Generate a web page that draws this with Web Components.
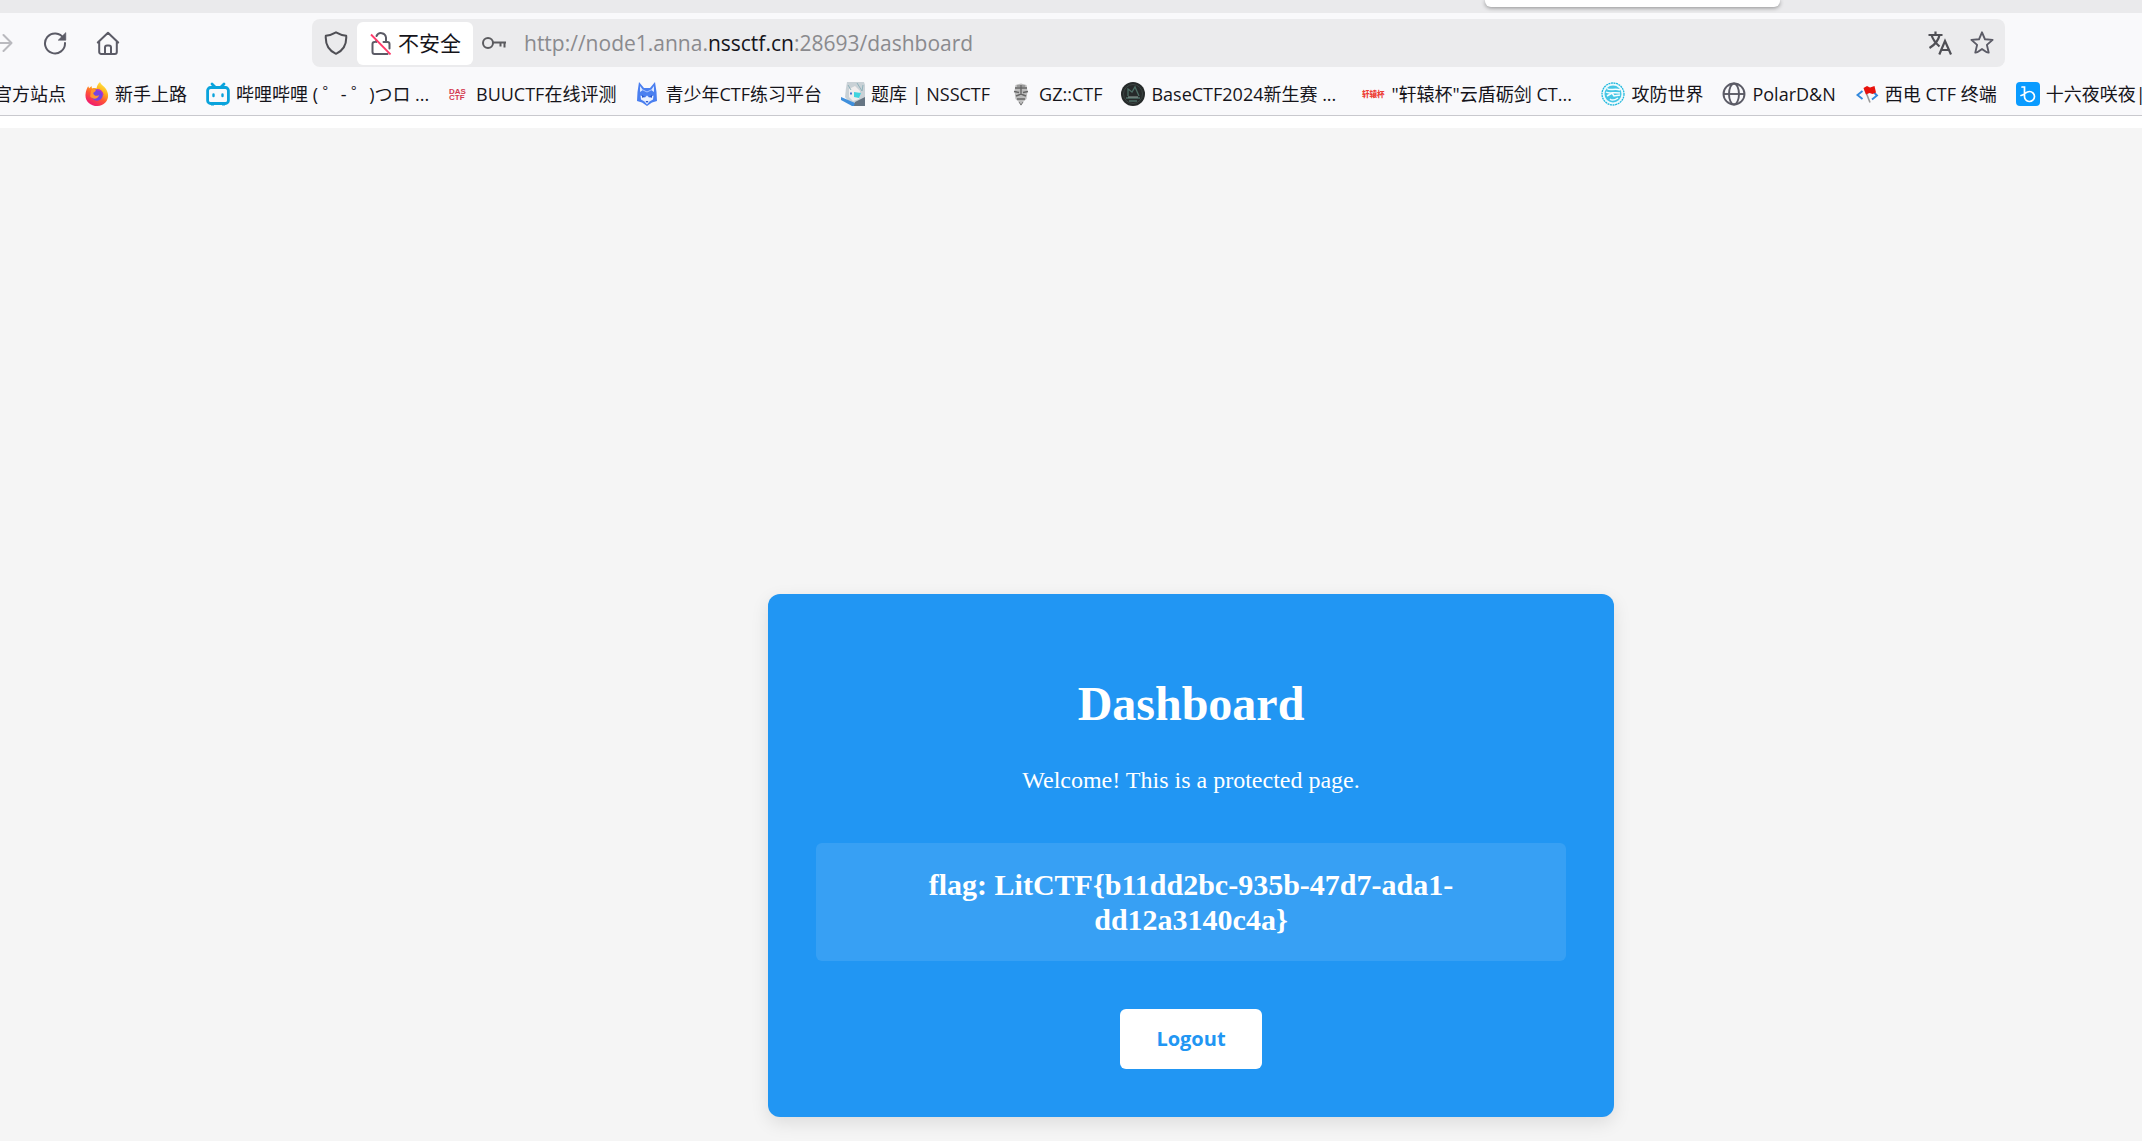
<!DOCTYPE html>
<html lang="zh-CN">
<head>
<meta charset="utf-8">
<title>Dashboard</title>
<style>
html, body { height: 100%; margin: 0; }
body { overflow: hidden; background: #f5f5f5; }
</style>
</head>
<body>
<browser-window></browser-window>
<script>
const ICONS = {
  forward: `<g fill="none" stroke="#b9b9be" stroke-width="2" stroke-linecap="round" stroke-linejoin="round"><path d="M1 12H21M13.500 4l8 8-8 8"/></g>`,
  reload: `<path d="M20.6 7.3A10 10 0 1 0 22 12" fill="none" stroke="#5b5b66" stroke-width="2" stroke-linecap="round"/><path d="M22.8 1.6v7.6h-7.6z" fill="#5b5b66" stroke="#5b5b66" stroke-linejoin="round" stroke-width=".6"/>`,
  home: `<g fill="none" stroke="#5b5b66" stroke-width="2" stroke-linejoin="round" stroke-linecap="round"><path d="M1.8 11.5L12 1.8l10.200 9.700M3.200 10.500V21a2 2 0 0 0 2 2h13.600a2 2 0 0 0 2-2V10.500M9 23v-6.500a2 2 0 0 1 2-2h2a2 2 0 0 1 2 2V23"/></g>`,
  shield: `<path d="M12 1.300C9 3 5.500 4.300 1.800 4.800 1.300 12.500 4.500 19.500 12 22.800 19.500 19.500 22.700 12.500 22.200 4.800 18.500 4.300 15 3 12 1.300z" fill="none" stroke="#4f4f55" stroke-width="2" stroke-linejoin="round"/>`,
  lock: `<g fill="none" stroke="#5b5b66" stroke-width="2" stroke-linecap="round"><path d="M7.500 5A5 5 0 0 1 17 6.500V11M7.300 9.500V11M14.500 11h4a2 2 0 0 1 2 2v4.500M5.500 11a2 2 0 0 0-2 2V21a2 2 0 0 0 2 2H18.500"/></g><path d="M2 3.500l19.500 20" stroke="#ff3b6b" stroke-width="1.800"/>`,
  key: `<g fill="none" stroke="#5b5b5f" stroke-width="2"><circle cx="6" cy="12" r="5"/><path d="M11 11.500h13M18.500 11.500v4M22.500 11.500v5"/></g>`,
  translate: `<g fill="none" stroke="#4f4f55" stroke-width="2.200"><path d="M.5 4H14.500M7.500 .5V4M11.500 4C10.500 9.500 6.500 14 1.500 17M3.500 4c1.500 5 4.500 8.500 8 11.500M11.300 23.500L17 10l6 13.500M13.200 19h8"/></g>`,
  star: `<path d="M12 1.300l3 7 7.600.6-5.700 5 1.800 7.700c-2.500.5-4-2.100-6.700-3.600-2.700 1.500-4.200 4.100-6.700 3.600l1.800-7.700-5.700-5L9 8.300z" fill="none" stroke="#5b5b66" stroke-width="1.900" stroke-linejoin="round"/>`,
  firefox: `<defs><linearGradient id="f" x1=".85" y1="0" x2=".3" y2="1"><stop offset="0" stop-color="#fff44f"/><stop offset=".35" stop-color="#ffb11b"/><stop offset=".62" stop-color="#ff5634"/><stop offset="1" stop-color="#ef1674"/></linearGradient></defs><path d="M15 0c1 3 4 4 6 7 5 8 .5 16.500-8.500 17C5 24 0 19 .5 12.500.7 9 2 6 3.200 4.200l1 2L6.500 4 7 6.500c1.500-.6 3-.6 4.500 0C12 3.500 13.200 1.500 15 0z" fill="url(#f)"/><circle cx="12" cy="13" r="5.800" fill="#7542e5"/><path d="M6 8.500c2-1.500 4-1 5 .2L8.200 11c.5 2.500 3 3.800 6 2-1 4-6 5-9 1.500z" fill="#ff9630"/><path d="M12 8c3-.5 5.500 1.500 5.800 5" stroke="#b833c7" stroke-width="1.500" fill="none"/>`,
  bili: `<g fill="none" stroke="#0aa3dc" stroke-width="2.800" stroke-linecap="round"><rect x="1.600" y="5.500" width="20.800" height="16" rx="3"/><path d="M6 2l3 3M18 2l-3 3"/><path d="M7.500 12.500v1.500M16.500 12.500v1.500" stroke-width="2.400"/></g><path d="M5 22h3v1.500H5zM16 22h3v1.500h-3z" fill="#0aa3dc"/>`,
  das: `<g fill="#d43a50" font-family="Liberation Sans" font-weight="700" font-size="8"><text x="3" y="11.500">DAS</text><text x="3" y="18">CTF</text></g>`,
  fox: `<path d="M4 0l5 6h6l5-6 1.500 10 .5 9-5 1.500-5 3.500-5-3.500L2 19l.5-9z" fill="#4a7ff0"/><path d="M5 4l3 4-3 2zM19 4l-3 4 3 2z" fill="#dbe7ff"/><path d="M5.500 13.500l4.500 2 2-2 2 2 4.500-2-.5 4-3.500 2-2.500 3-2.500-3-3.500-2z" fill="#e9f0ff"/><path d="M7 13l3 2-3 .8zM17 13l-3 2 3 .8zM10.500 19h3L12 21z" fill="#2856cc"/><path d="M8 8l4 2 4-2" stroke="#a9c5ff" fill="none"/>`,
  nss: `<path d="M6 0h17l1 3v21H11L4 15l1-9z" fill="#c9d1d6"/><path d="M8 7l6-3 5 5-1 8-6 2-4-4z" fill="#f1eeee"/><path d="M13 10l7 1-2 5-5-1z" fill="#42d4de"/><path d="M16 1l5 8 1-6M7 3l3 5" stroke="#8fb2bb" fill="none"/><path d="M9 11.500h2" stroke="#4a78d0" stroke-width="2"/><path d="M0 15l14 6v3H11L0 18z" fill="#3f8fdc"/><path d="M14 20l10-5v9H13z" fill="#667583"/>`,
  gz: `<path d="M6.500 3L12 1.500 17.500 3l1 6-1 8-3.500 3-2 4-2-4-3.500-3-1-8z" fill="#bcbcbc"/><path d="M6 6h12M5 9.500l5 1M19 9.500l-5 1M12 3v10M7 14l5-2 5 2M8 17h8" stroke="#666" stroke-width="1.400" fill="none"/><path d="M8 4h8M10 20l2 3 2-3" stroke="#777" fill="none"/>`,
  base: `<circle cx="12" cy="12" r="12" fill="#262a2a"/><circle cx="12" cy="12" r="9.500" fill="none" stroke="#3c4543"/><path d="M7 14V7l4 3 3-5 4 9M5 16h14M8 19h8" stroke="#4d6e65" stroke-width="1.300" fill="none"/><path d="M7 15h10" stroke="#93a39d"/>`,
  cup: `<g fill="#ed4038" font-family="Noto Sans CJK SC" font-weight="900" font-size="7.500"><text x="1" y="15">轩辕杯</text></g>`,
  xctf: `<circle cx="12" cy="12" r="11" fill="#effafd" stroke="#20b8dd" stroke-width="1.300" stroke-dasharray="2 .6"/><circle cx="12" cy="12" r="8.500" fill="#45c6e5"/><path d="M6 6.500c4 3 7-1 13 1.500M5 10c3 2 7 0 14 1M6 14l5-3 2 3 6-1M9 17c2 2 5 1 8-1" stroke="#f5fdff" stroke-width="1.500" fill="none"/>`,
  globe: `<g fill="none" stroke="#5b5b66" stroke-width="1.900"><circle cx="12" cy="12" r="10.500"/><ellipse cx="12" cy="12" rx="5" ry="10.500"/><path d="M1.500 12h21"/></g>`,
  flag: `<g fill="none" stroke="#3389dc" stroke-width="1.900"><path d="M7.500 9L2.500 13l5 4M18 9.500l4 4-5 4"/></g><path d="M9.500 6.500l5.500 14" stroke="#9a9a9a" stroke-width="1.600"/><path d="M8.500 6l3.500-2 3 1.500L19.500 4l1.500 6.500-3.500 1.500-3-1-3.500 1.500z" fill="#e8120c"/>`,
  blue: `<rect width="24" height="24" rx="4" fill="#0a9bff"/><g fill="none" stroke="#fff" stroke-width="1.700" stroke-linecap="round"><path d="M6 5h2.500V14a5 5 0 1 0 5-4.500C10 9.500 8 13 5 13.500"/></g>`
};

function define(name, css, html) {
  const template = document.createElement("template");
  template.innerHTML = `<style>*{box-sizing:border-box}${css}</style>${html}`;
  customElements.define(name, class extends HTMLElement {
    constructor() {
      super();
      this.attachShadow({ mode: "open" }).append(template.content.cloneNode(true));
    }
  });
}

customElements.define("ui-icon", class extends HTMLElement {
  connectedCallback() {
    if (this.shadowRoot) return;
    this.attachShadow({ mode: "open" }).innerHTML =
      `<style>:host{display:block;flex:none;width:24px;height:24px}svg{display:block;width:100%;height:100%}</style>
       <svg viewBox="0 0 24 24" aria-hidden="true">${ICONS[this.getAttribute("name")] || ""}</svg>`;
  }
});

define("tab-strip", `
  :host{display:flex;justify-content:flex-end;height:13px;padding-right:362px;background:#eaeaec}
  span{width:295px;height:7px;background:#fff;border-radius:0 0 6px 6px;box-shadow:0 1px 4px rgba(0,0,0,.4)}
`, `<span></span>`);

define("tool-button", `
  :host{display:block;flex:none}
  button{display:block;padding:0;border:0;background:none}
`, `<button type="button"><slot></slot></button>`);

define("address-bar", `
  :host{display:flex;align-items:center;height:48px;padding:0 11px 0 12px;border-radius:8px;background:#ebebed;font-size:21px;line-height:28px;color:#8a8a8e}
  .security{display:flex;align-items:center;gap:5px;height:43px;margin:0 9px;padding:0 12px;border:0;border-radius:6px;background:#fff;color:#15141a;font:inherit}
  .url{flex:1;min-width:0;margin-left:18px;white-space:nowrap;outline:0}
  b{font-weight:400;color:#15141a}
  .actions{display:flex;gap:18px}
`, `<tool-button><ui-icon name="shield"></ui-icon></tool-button>
  <button class="security" type="button"><ui-icon name="lock"></ui-icon><span>不安全</span></button>
  <tool-button><ui-icon name="key"></ui-icon></tool-button>
  <div class="url" role="textbox" contenteditable="true" spellcheck="false" aria-label="地址">http://node1.anna.<b>nssctf.cn</b>:28693/dashboard</div>
  <div class="actions"><tool-button><ui-icon name="translate"></ui-icon></tool-button><tool-button><ui-icon name="star"></ui-icon></tool-button></div>`);

define("nav-bar", `
  :host{display:flex;align-items:center;height:60px;padding-right:137px}
  .nav{display:flex;flex:none;gap:29px;width:312px;margin-left:-10px;margin-right:10px}
  address-bar{flex:1}
`, `<div class="nav">
    <tool-button><ui-icon name="forward"></ui-icon></tool-button>
    <tool-button><ui-icon name="reload"></ui-icon></tool-button>
    <tool-button><ui-icon name="home"></ui-icon></tool-button>
  </div><address-bar></address-bar>`);

define("book-mark", `
  :host{display:block;flex:none}
  a{display:flex;align-items:center;gap:6px;color:#15141a;text-decoration:none}
  span{white-space:pre}
  :host([wide]) span{width:191px}
`, `<a href="#"><slot name="icon"></slot><span><slot></slot></span></a>`);

const marks = [
  ["firefox", "新手上路"], ["bili", "哔哩哔哩 ( ゜- ゜)つロ ...", 1], ["das", "BUUCTF在线评测"],
  ["fox", "青少年CTF练习平台"], ["nss", "题库 | NSSCTF"], ["gz", "GZ::CTF"],
  ["base", "BaseCTF2024新生赛 ...", 1], ["cup", "\"轩辕杯\"云盾砺剑 CT...", 1], ["xctf", "攻防世界"],
  ["globe", "PolarD&amp;N"], ["flag", "西电 CTF 终端"], ["blue", "十六夜咲夜|"]
];
define("bookmarks-bar", `
  :host{display:flex;align-items:center;gap:19px;height:42px;overflow:hidden;font-size:18px;line-height:24px}
  .first{margin-left:-36px}
`, `<book-mark class="first"><ui-icon slot="icon"></ui-icon>官方站点</book-mark>` + marks.map(([icon, text, wide]) =>
    `<book-mark${wide ? " wide" : ""}><ui-icon slot="icon" name="${icon}"></ui-icon>${text}</book-mark>`).join(""));

define("dashboard-card", `
  :host{display:block;width:846px;padding:48px;border-radius:12px;background:#2196f3;color:#fff;text-align:center;box-shadow:0 6px 18px rgba(0,0,0,.1);font-family:"Liberation Serif",serif}
  h1{margin:32px 0;font-size:48px;line-height:60px}
  p{margin:0 0 48px;font-size:24px;line-height:29px}
  .flag{margin-bottom:48px;padding:24px;border-radius:6px;background:rgba(255,255,255,.1);font-size:30px;line-height:35px;font-weight:700}
  button{height:60px;padding:0 36px;border:0;border-radius:6px;background:#fff;color:#2196f3;font:700 20px/28px "Open Sans",sans-serif;display:block;margin:0 auto}
`, `<h1>Dashboard</h1><p>Welcome! This is a protected page.</p>
  <div class="flag">flag: LitCTF{b11dd2bc-935b-47d7-ada1-dd12a3140c4a}</div>
  <button type="button">Logout</button>`);

define("browser-window", `
  :host{display:flex;flex-direction:column;min-height:100%;font-family:"Open Sans","Noto Sans CJK SC",sans-serif}
  header{background:#f9f9fb;border-bottom:1px solid #c9c9ce}
  .edge{height:12px;background:#fff}
  main{flex:1;display:flex;justify-content:center;align-items:flex-start;padding:466px 0 0 240px;background:#f5f5f5}
`, `<header><tab-strip></tab-strip><nav-bar></nav-bar><bookmarks-bar></bookmarks-bar></header>
  <div class="edge"></div>
  <main><dashboard-card></dashboard-card></main>`);
</script>
</body>
</html>
